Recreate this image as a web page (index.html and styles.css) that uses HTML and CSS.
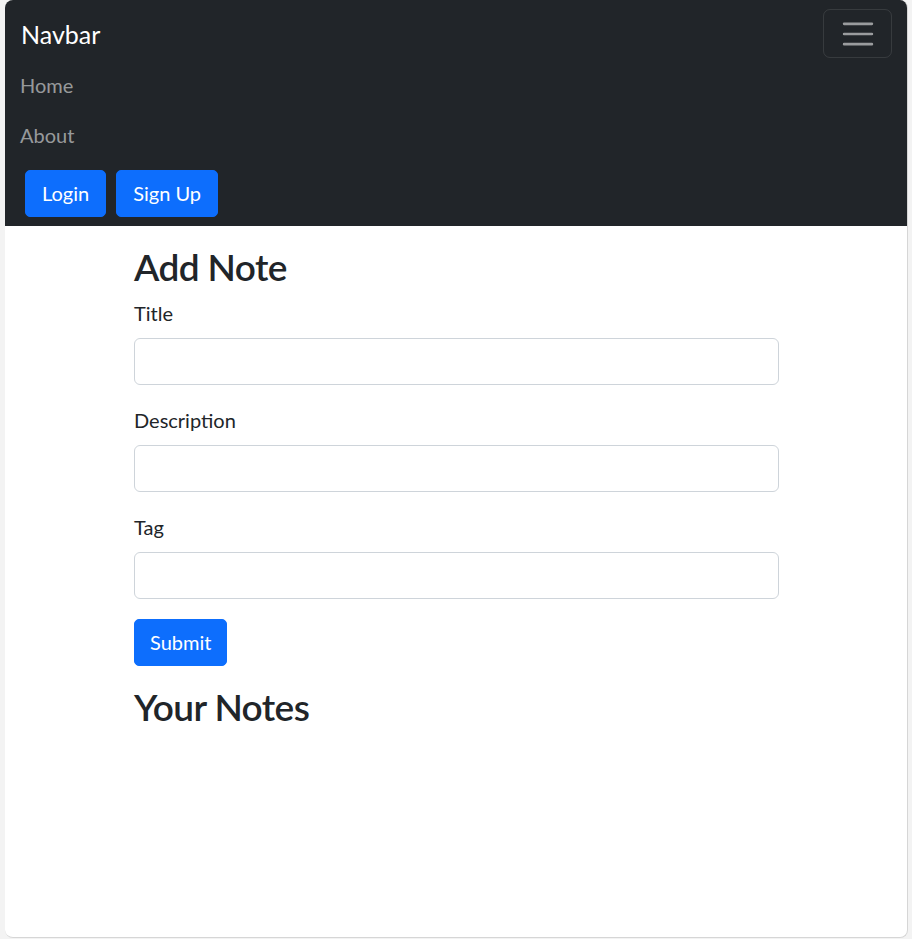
FILE: index.html
```html
<!DOCTYPE html>
<html lang="en">
<head>
<meta charset="utf-8">
<title>iNotebook</title>
<link rel="stylesheet" href="styles.css">
</head>
<body>
<div class="window">
  <nav class="navbar">
    <div class="nav-top">
      <a class="brand" href="#">Navbar</a>
      <button class="toggler" type="button" aria-label="Toggle navigation">
        <svg width="38" height="38" viewBox="0 0 30 30"><path d="M4 7h22M4 15h22M4 23h22" stroke="rgba(255,255,255,0.55)" stroke-width="2" stroke-linecap="round" fill="none"/></svg>
      </button>
    </div>
    <ul class="nav-links">
      <li><a href="#">Home</a></li>
      <li><a href="#">About</a></li>
    </ul>
    <div class="auth">
      <a class="btn" href="#">Login</a>
      <a class="btn" href="#">Sign Up</a>
    </div>
  </nav>
  <main class="container">
    <h2 class="add-title">Add Note</h2>
    <form class="note-form">
      <div class="field">
        <label for="title">Title</label>
        <input id="title" type="text">
      </div>
      <div class="field">
        <label for="description">Description</label>
        <input id="description" type="text">
      </div>
      <div class="field">
        <label for="tag">Tag</label>
        <input id="tag" type="text">
      </div>
      <button type="submit" class="btn">Submit</button>
    </form>
    <h2 class="notes-title">Your Notes</h2>
  </main>
</div>
</body>
</html>
```

FILE: styles.css
```css
* { box-sizing: border-box; }
html, body { margin: 0; padding: 0; }
body {
  background: #f3f3f3;
  font-family: Lato, "Noto Sans", sans-serif;
  color: #212529;
  height: 939px;
  overflow: hidden;
}
.window {
  margin-left: 5px;
  width: 903px;
  height: 938px;
  background: #fff;
  border: 1px solid #d6d6d6;
  border-top: none;
  border-left: none;
  border-radius: 8px;
  overflow: hidden;
}
.navbar {
  background: #212529;
  padding: 10px 15px 10px 15px;
  height: 226px;
}
.nav-top {
  display: flex;
  justify-content: space-between;
  align-items: center;
  height: 48px;
}
.brand {
  color: #fff;
  text-decoration: none;
  font-size: 25px;
  line-height: 37px;
  padding-left: 1px;
}
.toggler {
  width: 69px;
  height: 49px;
  margin-top: -1px;
  background: transparent;
  border: 1px solid rgba(255,255,255,0.1);
  border-radius: 7px;
  display: flex;
  align-items: center;
  justify-content: center;
  padding: 0;
}
.toggler svg { display: block; }
.nav-links {
  list-style: none;
  margin: 2px 0 10px 0;
  padding: 0;
}
.nav-links a {
  display: block;
  color: rgba(255,255,255,0.55);
  text-decoration: none;
  font-size: 20px;
  line-height: 30px;
  padding: 10px 0;
}
.auth {
  display: flex;
  gap: 10px;
  padding-left: 5px;
}
.btn {
  display: inline-block;
  background: #0d6efd;
  color: #fff;
  border: 1px solid #0d6efd;
  border-radius: 5px;
  font-family: inherit;
  font-size: 20px;
  line-height: 30px;
  padding: 7px 16px 8px;
  text-decoration: none;
  cursor: pointer;
}
.container {
  width: 645px;
  margin-left: 129px;
  padding-top: 14px;
}
h2 {
  font-size: 37px;
  font-weight: 600;
  letter-spacing: -0.6px;
  line-height: 48px;
  margin: 0 0 10px;
}
.add-title { padding-top: 3px; margin-bottom: 7px; }
.field {
  display: flex;
  flex-direction: column;
  align-items: flex-start;
  margin-bottom: 20px;
}
.field label {
  font-size: 20px;
  line-height: 30px;
  margin-bottom: 10px;
}
.field input {
  width: 100%;
  height: 47px;
  border: 1px solid #ced4da;
  border-radius: 6px;
  font-size: 20px;
  padding: 7px 15px;
}
.note-form { margin: 0; }
.note-form .btn { display: block; padding: 7px 15px 8px; }
.notes-title { margin-top: 17px; }
```
